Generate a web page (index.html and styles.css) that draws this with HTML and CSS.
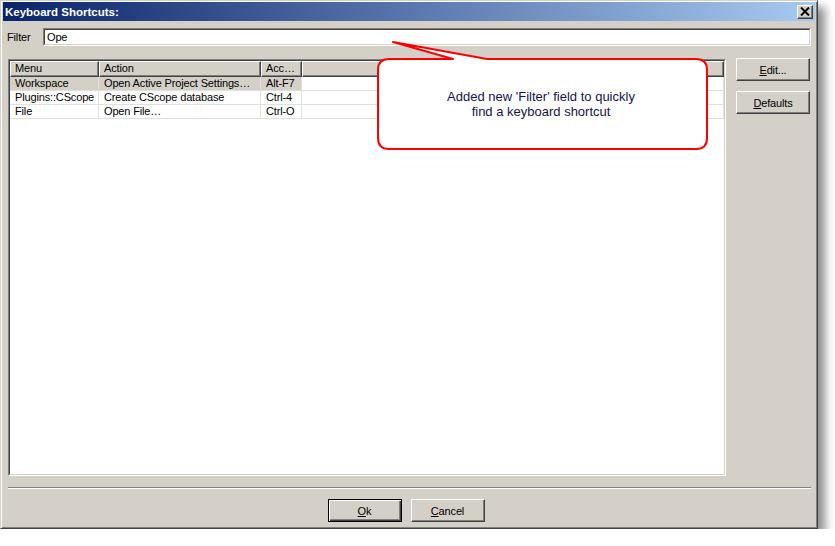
FILE: index.html
```html
<!DOCTYPE html>
<html>
<head>
<meta charset="utf-8">
<link rel="stylesheet" href="styles.css">
</head>
<body>
<div class="window">
  <div class="titlebar">
    <span class="title">Keyboard Shortcuts:</span>
    <div class="close">
      <svg width="10" height="9" viewBox="0 0 10 9"><path d="M1 0.5 L9 8.5 M9 0.5 L1 8.5" stroke="#000" stroke-width="2"/></svg>
    </div>
  </div>
  <div class="content">
    <div class="filter-row">
      <span class="filter-label">Filter</span>
      <div class="input"><div class="input-inner">Ope</div></div>
    </div>
    <div class="main">
      <div class="list">
        <div class="list-inner">
          <div class="header">
            <div class="hcell c1">Menu</div>
            <div class="hcell c2">Action</div>
            <div class="hcell c3">Acc…</div>
            <div class="hcell filler"></div>
          </div>
          <div class="row selected">
            <div class="cell c1">Workspace</div>
            <div class="cell c2">Open Active Project Settings…</div>
            <div class="cell c3">Alt-F7</div>
            <div class="cell filler"></div>
          </div>
          <div class="row">
            <div class="cell c1">Plugins::CScope</div>
            <div class="cell c2">Create CScope database</div>
            <div class="cell c3">Ctrl-4</div>
            <div class="cell filler"></div>
          </div>
          <div class="row">
            <div class="cell c1">File</div>
            <div class="cell c2">Open File…</div>
            <div class="cell c3">Ctrl-O</div>
            <div class="cell filler"></div>
          </div>
        </div>
      </div>
      <div class="side-buttons">
        <div class="btn"><span><u>E</u>dit...</span></div>
        <div class="btn"><span><u>D</u>efaults</span></div>
      </div>
    </div>
    <div class="separator"></div>
    <div class="bottom-buttons">
      <div class="btn default"><span><u>O</u>k</span></div>
      <div class="btn"><span><u>C</u>ancel</span></div>
    </div>
  </div>
  <div class="callout">
    <svg class="callout-shape" width="335" height="115" viewBox="0 0 335 115">
      <path d="M15 21 L75 21 L15 4 L109 21 L318 21 Q329 21 329 32 L329 100 Q329 111 318 111 L11 111 Q0 111 0 100 L0 32 Q0 21 11 21 Z" transform="translate(1 0)" fill="#fff" stroke="#ff0000" stroke-width="2" stroke-linejoin="round"/>
    </svg>
    <div class="callout-text">Added new 'Filter' field to quickly<br>find a keyboard shortcut</div>
  </div>
</div>
</body>
</html>
```
FILE: styles.css
```css
html, body {
  margin: 0;
  padding: 0;
  background: #ffffff;
}
body {
  font-family: "Liberation Sans", Arial, sans-serif;
  font-size: 11px;
  letter-spacing: -0.15px;
  color: #000;
}
.window {
  position: relative;
  box-sizing: border-box;
  width: 818px;
  height: 529px;
  background: #d4d0c8;
  border: 1px solid;
  border-color: #d4d0c8 #404040 #404040 #d4d0c8;
  box-shadow: inset 1px 1px #ffffff, inset -1px -1px #808080, 7px 7px 9px rgba(0, 0, 0, 0.45);
  padding: 1px 2px 0 2px;
}
.titlebar {
  height: 19px;
  background: linear-gradient(to right, #0a246a, #a6caf0);
  display: flex;
  align-items: center;
  justify-content: space-between;
  padding: 0 2px 0 2px;
}
.title {
  color: #fff;
  font-weight: bold;
  font-size: 11.5px;
  letter-spacing: 0;
}
.close {
  box-sizing: border-box;
  width: 16px;
  height: 14px;
  background: #d4d0c8;
  border: 1px solid;
  border-color: #ffffff #404040 #404040 #ffffff;
  box-shadow: inset -1px -1px #808080;
  display: flex;
  align-items: center;
  justify-content: center;
  padding: 0 1px 1px 0;
}
.close svg { display: block; }
.content {
  padding: 0 4px 0 4px;
}
.filter-row {
  display: flex;
  align-items: center;
  margin-top: 7px;
  height: 18px;
}
.filter-label {
  width: 36px;
  flex: none;
}
.input {
  flex: 1;
  box-sizing: border-box;
  height: 18px;
  border: 1px solid;
  border-color: #808080 #ffffff #ffffff #808080;
  background: #fff;
}
.input-inner {
  box-sizing: border-box;
  height: 16px;
  border: 1px solid;
  border-color: #404040 #d4d0c8 #d4d0c8 #404040;
  padding: 0 2px;
  line-height: 14px;
}
.main {
  display: flex;
  gap: 10px;
  margin-top: 12px;
  height: 418px;
  padding-left: 1px;
}
.list {
  margin-top: 1px;
  box-sizing: border-box;
  width: 718px;
  height: 417px;
  border: 1px solid;
  border-color: #808080 #ffffff #ffffff #808080;
}
.list-inner {
  box-sizing: border-box;
  height: 100%;
  border: 1px solid;
  border-color: #404040 #d4d0c8 #d4d0c8 #404040;
  background: #fff;
}
.header, .row {
  display: flex;
}
.hcell {
  box-sizing: border-box;
  height: 16px;
  background: #d4d0c8;
  border: 1px solid;
  border-color: #ffffff #404040 #404040 #ffffff;
  box-shadow: inset -1px -1px #808080;
  padding-left: 4px;
  line-height: 13px;
  white-space: nowrap;
  overflow: hidden;
}
.c1 { width: 89px; flex: none; }
.c2 { width: 162px; flex: none; }
.c3 { width: 41px; flex: none; }
.filler { flex: 1; }
.cell {
  box-sizing: border-box;
  height: 14px;
  border-right: 1px solid #e2e0dc;
  border-bottom: 1px solid #e2e0dc;
  padding-left: 5px;
  line-height: 13px;
  white-space: nowrap;
  overflow: hidden;
}
.row.selected .c1, .row.selected .c2, .row.selected .c3 {
  background: #d4d0c8;
}
.side-buttons {
  display: flex;
  flex-direction: column;
  gap: 10px;
}
.btn {
  box-sizing: border-box;
  width: 74px;
  height: 23px;
  background: #d4d0c8;
  border: 1px solid;
  border-color: #ffffff #404040 #404040 #ffffff;
  box-shadow: inset -1px -1px #808080;
  display: flex;
  align-items: center;
  justify-content: center;
}
.btn u { text-decoration: underline; }
.btn.default {
  border-color: #000;
  box-shadow: inset 1px 1px #ffffff, inset -1px -1px #404040, inset -2px -2px #808080;
}
.separator {
  margin-top: 11px;
  margin-left: 1px;
  height: 1px;
  background: #808080;
  border-bottom: 1px solid #ffffff;
}
.bottom-buttons {
  display: flex;
  justify-content: center;
  gap: 9px;
  margin-top: 10px;
  padding-right: 6px;
}
.callout {
  position: absolute;
  left: 376px;
  top: 37px;
  width: 335px;
  height: 115px;
}
.callout-shape {
  position: absolute;
  left: 0;
  top: 0;
}
.callout-text {
  position: absolute;
  left: 0;
  top: 22px;
  width: 328px;
  height: 88px;
  display: flex;
  align-items: center;
  justify-content: center;
  text-align: center;
  font-size: 13px;
  letter-spacing: 0;
  line-height: 15px;
  color: #14144a;
}
```
